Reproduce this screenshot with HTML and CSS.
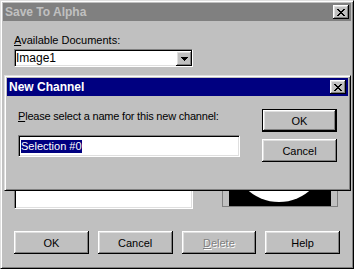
FILE: index.html
```html
<!DOCTYPE html>
<html lang="en">
<head>
    <meta charset="UTF-8">
    <title>Save To Alpha</title>
    <link rel="stylesheet" href="styles.css">
</head>
<body>
    <div class="window">
        <div class="titlebar inactive">
            <span class="title">Save To Alpha</span>
            <button class="close" aria-label="Close">
                <svg width="8" height="7" viewBox="0 0 8 7" shape-rendering="crispEdges"><path d="M0 0h2v1H0zM6 0h2v1H6zM1 1h2v1H1zM5 1h2v1H5zM2 2h4v1H2zM3 3h2v1H3zM2 4h4v1H2zM1 5h2v1H1zM5 5h2v1H5zM0 6h2v1H0zM6 6h2v1H6z" fill="#000"/></svg>
            </button>
        </div>
        <div class="body">
            <label class="label"><u>A</u>vailable Documents:</label>
            <div class="select">
                <span class="select-value">Image1</span>
                <span class="select-arrow">
                    <svg width="7" height="4" viewBox="0 0 7 4" shape-rendering="crispEdges"><path d="M0 0h7v1H0zM1 1h5v1H1zM2 2h3v1H2zM3 3h1v1H3z" fill="#000"/></svg>
                </span>
            </div>
            <div class="lower">
                <div class="name-box"></div>
                <div class="preview">
                    <svg width="102" height="76" viewBox="0 0 102 76">
                        <rect width="102" height="76" fill="#000"/>
                        <circle cx="50" cy="25" r="47" fill="#fff"/>
                    </svg>
                </div>
            </div>
            <div class="buttons">
                <button class="btn">OK</button>
                <button class="btn">Cancel</button>
                <button class="btn disabled"><u>D</u>elete</button>
                <button class="btn">Help</button>
            </div>
        </div>

        <!-- modal child dialog sits over the parent window -->
        <div class="dialog">
            <div class="titlebar active">
                <span class="title">New Channel</span>
                <button class="close" aria-label="Close">
                    <svg width="8" height="7" viewBox="0 0 8 7" shape-rendering="crispEdges"><path d="M0 0h2v1H0zM6 0h2v1H6zM1 1h2v1H1zM5 1h2v1H5zM2 2h4v1H2zM3 3h2v1H3zM2 4h4v1H2zM1 5h2v1H1zM5 5h2v1H5zM0 6h2v1H0zM6 6h2v1H6z" fill="#000"/></svg>
                </button>
            </div>
            <div class="dialog-body">
                <div class="dialog-main">
                    <label class="label narrow"><u>P</u>lease select a name for this new channel:</label>
                    <div class="edit"><span class="selected">Selection #0</span></div>
                </div>
                <div class="dialog-buttons">
                    <button class="btn default">OK</button>
                    <button class="btn">Cancel</button>
                </div>
            </div>
        </div>
    </div>
</body>
</html>
```

FILE: styles.css
```css
html, body {
    margin: 0;
    background: #c0c0c0;
    font-family: "Liberation Sans", Arial, sans-serif;
    font-size: 11px;
    line-height: 13px;
    color: #000;
}
.window {
    position: relative;
    width: 354px;
    height: 269px;
    box-sizing: border-box;
    border: 1px solid;
    border-color: #dfdfdf #000 #000 #dfdfdf;
    box-shadow: inset 1px 1px #fff, inset -1px -1px #808080;
    padding: 2px;
    display: flex;
    flex-direction: column;
}
.titlebar {
    height: 18px;
    display: flex;
    align-items: center;
    padding: 0 2px;
    flex-shrink: 0;
}
.titlebar.inactive {
    background: #808080;
    color: #c0c0c0;
}
.titlebar.active {
    background: #000080;
    color: #fff;
}
.title {
    font-weight: bold;
    font-size: 12px;
}
.close {
    margin-left: auto;
    width: 16px;
    height: 14px;
    padding: 0;
    border: 0;
    background: #c0c0c0;
    box-shadow: inset -1px -1px #000, inset 1px 1px #fff, inset -2px -2px #808080, inset 2px 2px #dfdfdf;
    display: flex;
    align-items: center;
    justify-content: center;
}
.close svg {
    display: block;
    margin-left: -1px;
}
.body {
    flex: 1;
    display: flex;
    flex-direction: column;
    padding: 13px 11px 0;
}
.label {
    display: block;
}
.label.narrow {
    letter-spacing: -0.2px;
}
.select {
    margin-top: 2px;
    width: 179px;
    height: 18px;
    box-sizing: border-box;
    border: 1px solid;
    border-color: #808080 #fff #fff #808080;
    box-shadow: inset 1px 1px #000, inset -1px -1px #dfdfdf;
    background: #fff;
    display: flex;
}
.select-value {
    padding-left: 1px;
    align-self: center;
    font-size: 12px;
}
.select-arrow {
    margin-left: auto;
    margin-top: 1px;
    width: 16px;
    height: 15px;
    background: #c0c0c0;
    box-shadow: inset -1px -1px #000, inset 1px 1px #fff, inset -2px -2px #808080, inset 2px 2px #dfdfdf;
    display: flex;
    align-items: center;
    justify-content: center;
}
.lower {
    display: flex;
    align-items: flex-end;
    height: 80px;
    margin-top: 62px;
}
.name-box {
    width: 179px;
    height: 20px;
    box-sizing: border-box;
    border: 1px solid;
    border-color: #808080 #fff #fff #808080;
    box-shadow: inset 1px 1px #000, inset -1px -1px #dfdfdf;
    background: #fff;
}
.preview {
    width: 116px;
    height: 78px;
    margin-left: 29px;
    margin-bottom: 2px;
    box-sizing: border-box;
    border: 1px solid #808080;
    padding: 0 6px;
}
.preview svg {
    display: block;
}
.buttons {
    display: flex;
    gap: 9px;
    margin-top: 22px;
}
.btn {
    width: 75px;
    height: 23px;
    padding: 0;
    border: 0;
    background: #c0c0c0;
    box-shadow: inset -1px -1px #000, inset 1px 1px #fff, inset -2px -2px #808080, inset 2px 2px #dfdfdf;
    font-family: inherit;
    font-size: 11px;
    color: #000;
}
.btn.disabled {
    color: #808080;
    text-shadow: 1px 1px #fff;
}
.btn.default {
    border: 1px solid #000;
    box-shadow: inset -1px -1px #000, inset 1px 1px #fff, inset -2px -2px #808080, inset 2px 2px #dfdfdf;
}
.dialog {
    position: absolute;
    left: 3px;
    top: 74px;
    width: 347px;
    height: 116px;
    box-sizing: border-box;
    border: 1px solid;
    border-color: #dfdfdf #000 #000 #dfdfdf;
    box-shadow: inset 1px 1px #fff, inset -1px -1px #808080;
    background: #c0c0c0;
    padding: 2px;
    display: flex;
    flex-direction: column;
}
.dialog-body {
    display: flex;
    padding: 13px 11px 0;
}
.dialog-main {
    padding-top: 1px;
}
.edit {
    margin-top: 12px;
    width: 222px;
    height: 22px;
    box-sizing: border-box;
    border: 1px solid;
    border-color: #808080 #fff #fff #808080;
    box-shadow: inset 1px 1px #000, inset -1px -1px #dfdfdf;
    background: #fff;
    display: flex;
    align-items: center;
    padding-left: 2px;
}
.selected {
    background: #000080;
    color: #fff;
}
.dialog-buttons {
    margin-left: auto;
    display: flex;
    flex-direction: column;
    gap: 7px;
}
```
